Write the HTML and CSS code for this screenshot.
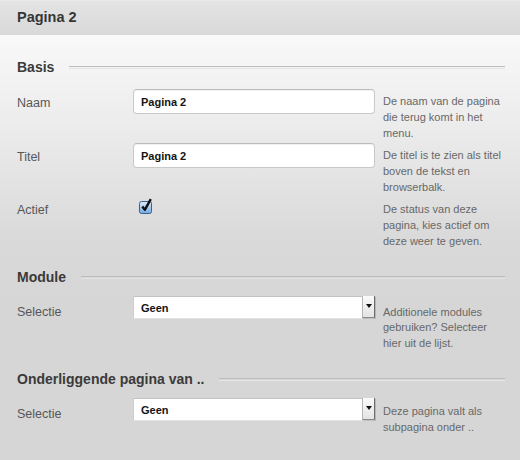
FILE: index.html
```html
<!DOCTYPE html>
<html lang="nl">
<head>
<meta charset="utf-8">
<title>Pagina 2</title>
<link rel="stylesheet" href="styles.css">
</head>
<body>
<div class="panel">
  <div class="panel-header"><h1 class="panel-title">Pagina 2</h1></div>
  <div class="panel-body">
    <section class="group group--first">
      <h2 class="group-title">Basis</h2>
      <div class="row">
        <label class="row-label">Naam</label>
        <div class="row-field"><input class="text-input" type="text" value="Pagina 2"></div>
        <p class="row-help">De naam van de pagina die terug komt in het menu.</p>
      </div>
      <div class="row">
        <label class="row-label">Titel</label>
        <div class="row-field"><input class="text-input" type="text" value="Pagina 2"></div>
        <p class="row-help">De titel is te zien als titel boven de tekst en browserbalk.</p>
      </div>
      <div class="row">
        <label class="row-label row-label--check">Actief</label>
        <div class="row-field">
          <svg class="checkbox" width="16" height="17" viewBox="0 0 16 17">
            <defs>
              <linearGradient id="cbfill" x1="0" y1="0" x2="0" y2="1">
                <stop offset="0" stop-color="#dcecfb"/>
                <stop offset="0.5" stop-color="#a9cdf2"/>
                <stop offset="1" stop-color="#6ea8e2"/>
              </linearGradient>
            </defs>
            <rect x="0.5" y="4.5" width="12" height="12" rx="2" fill="url(#cbfill)" stroke="#3f5f87"/>
            <path d="M3.3 9.6 L5.8 12.8 L11.8 2.2" fill="none" stroke="#111" stroke-width="2.4" stroke-linejoin="round"/>
          </svg>
        </div>
        <p class="row-help">De status van deze pagina, kies actief om deze weer te geven.</p>
      </div>
    </section>
    <section class="group">
      <h2 class="group-title">Module</h2>
      <div class="row row--select">
        <label class="row-label">Selectie</label>
        <div class="row-field">
          <div class="select"><span class="select-text">Geen</span><span class="select-btn"><span class="select-arrow"></span></span></div>
        </div>
        <p class="row-help">Additionele modules gebruiken? Selecteer hier uit de lijst.</p>
      </div>
    </section>
    <section class="group">
      <h2 class="group-title">Onderliggende pagina van ..</h2>
      <div class="row row--select">
        <label class="row-label">Selectie</label>
        <div class="row-field">
          <div class="select"><span class="select-text">Geen</span><span class="select-btn"><span class="select-arrow"></span></span></div>
        </div>
        <p class="row-help row-help--tight">Deze pagina valt als subpagina onder ..</p>
      </div>
    </section>
  </div>
</div>
</body>
</html>
```

FILE: styles.css
```css
html {
  background: #d6d6d6;
}
body {
  margin: 0;
  font-family: "Liberation Sans", Arial, sans-serif;
  color: #555;
}
.panel {
  width: 520px;
  min-height: 460px;
}
.panel-header {
  height: 35px;
  background: linear-gradient(to bottom, #ececec 0, #e3e3e3 2px, #d9d9d9 100%);
  padding-left: 17px;
}
.panel-title {
  margin: 0;
  font-size: 14.5px;
  line-height: 35px;
  font-weight: bold;
  color: #363636;
}
.panel-body {
  background: linear-gradient(to bottom, #f9f9f9 0, #ececec 90px, #dadada 200px, #d6d6d6 260px, #d6d6d6 100%);
  min-height: 425px;
  padding: 23px 0 0 17px;
  box-sizing: border-box;
}
.group {
  margin-top: 17px;
}
.group--first {
  margin-top: 0;
}
.group-title {
  display: flex;
  align-items: center;
  margin: 0 0 10px;
  font-size: 14px;
  line-height: 18px;
  font-weight: bold;
  color: #3a3a3a;
}
.group--first .group-title {
  margin-bottom: 13px;
}
.group-title::after {
  content: "";
  flex: 1;
  height: 1px;
  margin: 1px 15px 0 15px;
  border-top: 1px solid #bdbdbd;
  border-bottom: 1px solid #e4e4e4;
}
.row {
  display: grid;
  grid-template-columns: 108px 242px 121px;
  column-gap: 8px;
  align-items: start;
}
.row-label {
  margin-top: 6px;
  font-size: 12.5px;
  line-height: 16px;
  color: #575757;
}
.row-label--check {
  margin-top: 5px;
}
.row--select .row-label {
  margin-top: 8px;
}
.row-help {
  margin: 4px 0 2px;
  font-size: 11px;
  line-height: 16px;
  color: #686868;
}
.row--select .row-help {
  margin-top: 8.5px;
  line-height: 15.5px;
}
.row--select .row-help--tight {
  margin-top: 6px;
}
.text-input {
  display: block;
  box-sizing: border-box;
  width: 242px;
  height: 25px;
  margin: 0;
  padding: 0 0 0 7px;
  border: 1px solid #c9c9c9;
  border-top-color: #bcbcbc;
  border-radius: 4px;
  background: #fff;
  box-shadow: inset 0 1px 1px rgba(0, 0, 0, 0.06);
  font-family: "Liberation Sans", Arial, sans-serif;
  font-size: 11px;
  font-weight: bold;
  color: #151515;
  outline: none;
}
.checkbox {
  display: block;
  margin: 0 0 0 6px;
}
.select {
  display: flex;
  box-sizing: border-box;
  width: 242px;
  height: 23px;
  background: #fff;
  border-top: 1px solid #c2c2c2;
  border-left: 1px solid #cdcdcd;
  border-bottom: 1px solid #e2e2e2;
}
.select-text {
  flex: 1;
  padding: 4px 0 0 7px;
  font-size: 11px;
  line-height: 14px;
  font-weight: bold;
  color: #141414;
}
.select-btn {
  display: flex;
  align-items: center;
  justify-content: center;
  width: 11px;
  height: 21px;
  background: linear-gradient(to bottom, #fafafa, #e4e4e4);
  border-left: 1px solid #b5b5b5;
  border-right: 1px solid #6c6c6c;
  border-bottom: 1px solid #8a8a8a;
  margin-top: -1px;
  box-shadow: 1px 1px 0 rgba(0, 0, 0, 0.15);
}
.select-arrow {
  width: 0;
  height: 0;
  margin-top: -1px;
  border-left: 3px solid transparent;
  border-right: 3px solid transparent;
  border-top: 4px solid #111;
}
```
